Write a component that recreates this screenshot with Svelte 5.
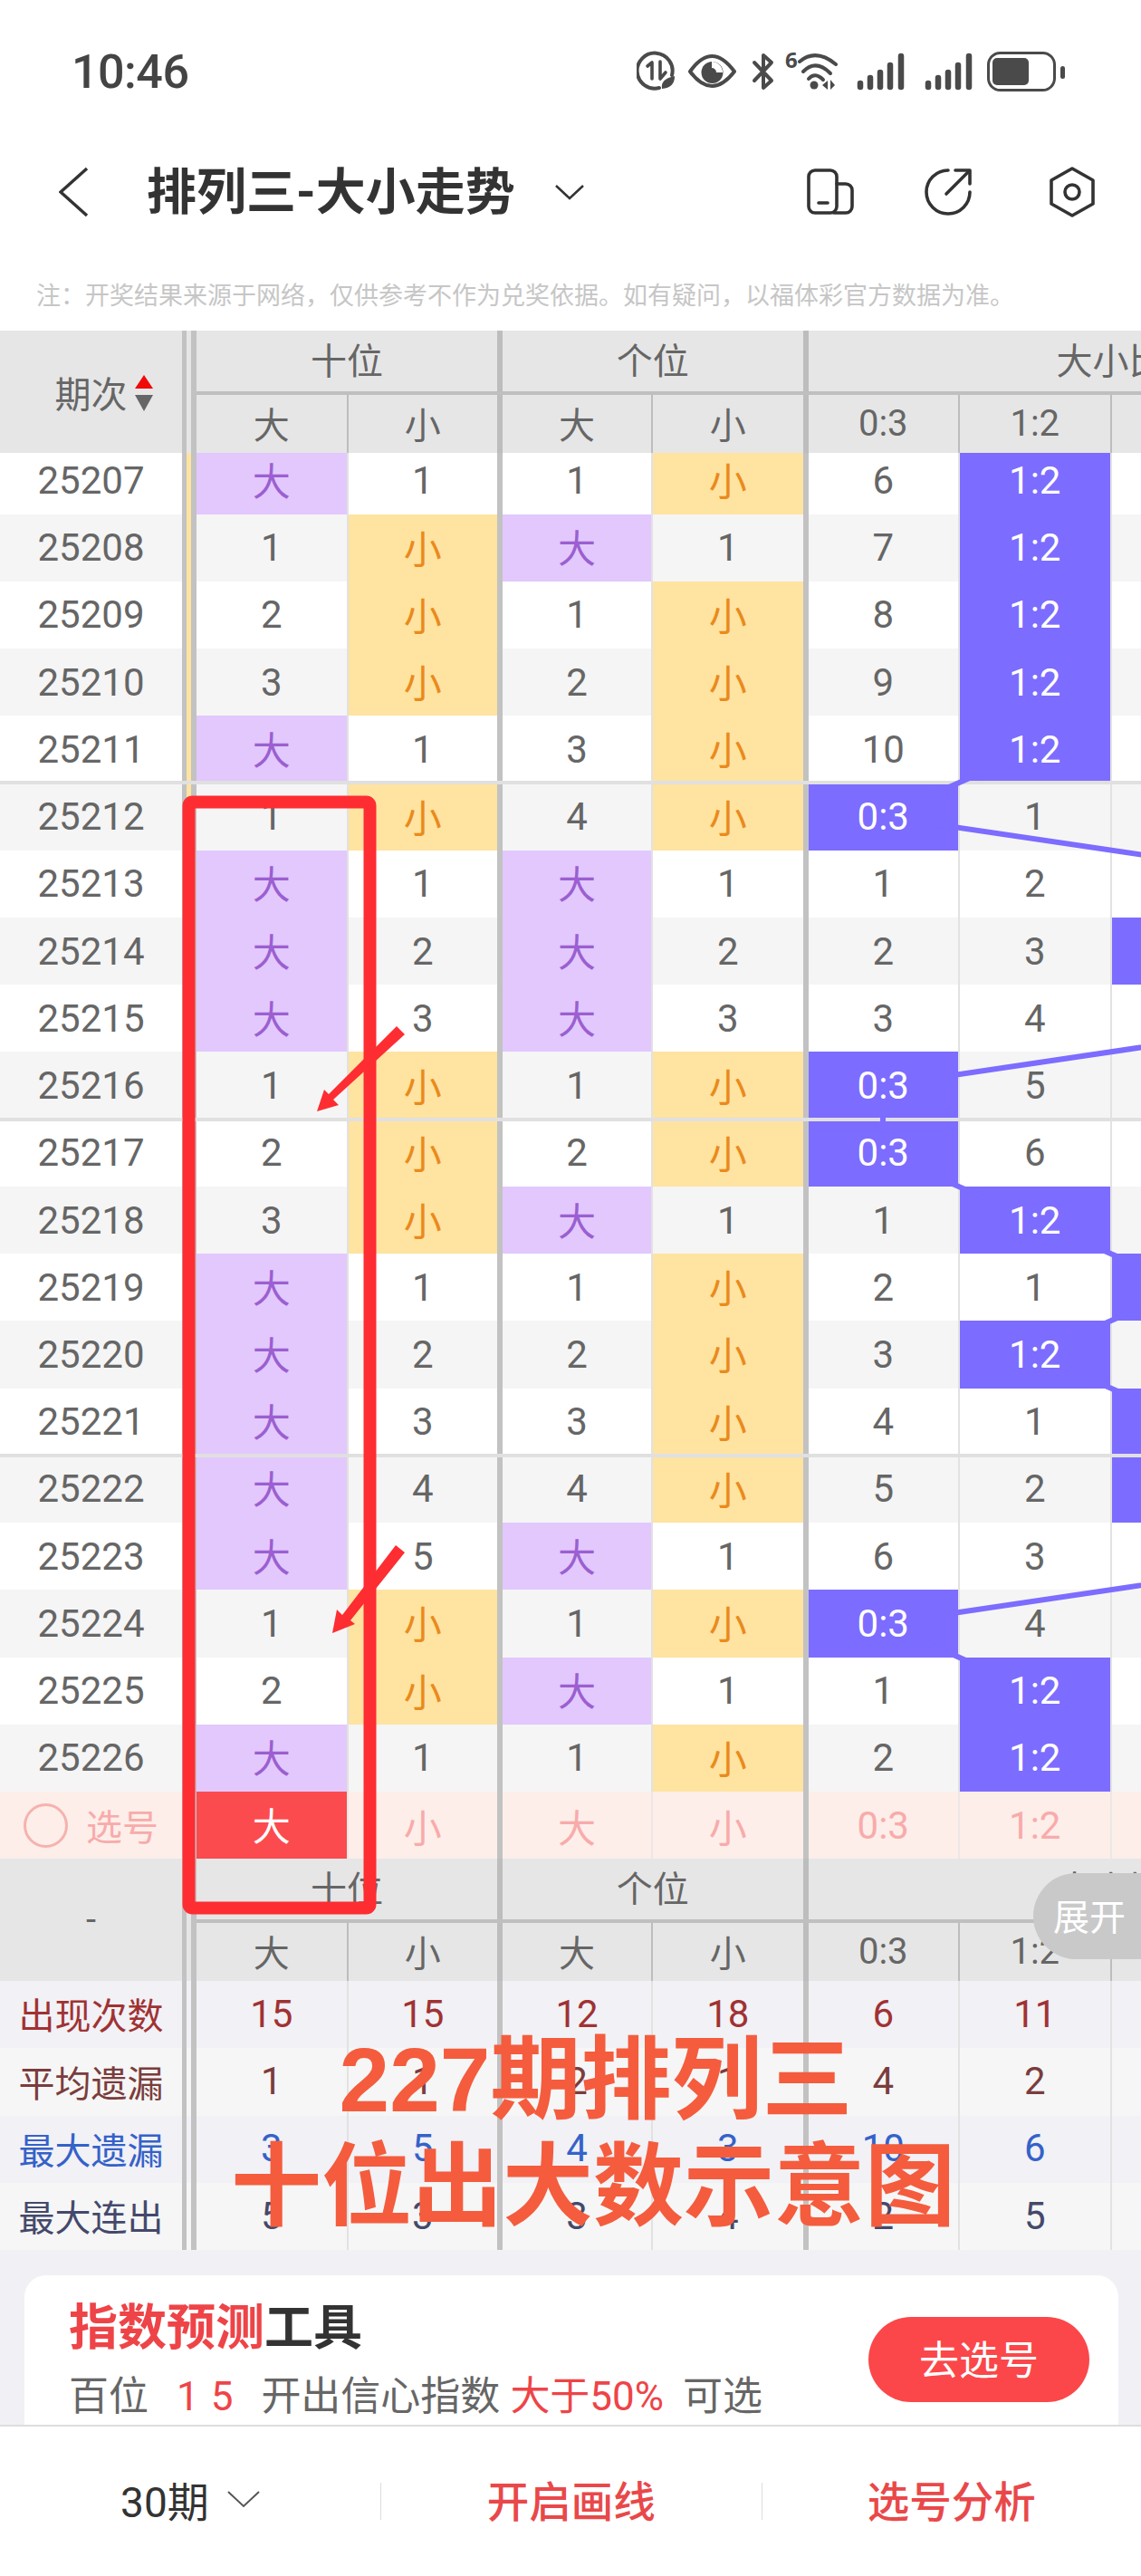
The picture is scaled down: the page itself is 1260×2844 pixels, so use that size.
<script>
  const rows = [
    [25207, ['大','1','1','小','6','1:2'], 0, 1],
    [25208, ['1','小','大','1','7','1:2'], 0, 1],
    [25209, ['2','小','1','小','8','1:2'], 0, 1],
    [25210, ['3','小','2','小','9','1:2'], 0, 1],
    [25211, ['大','1','3','小','10','1:2'], 0, 1],
    [25212, ['1','小','4','小','0:3','1'], 0, 1],
    [25213, ['大','1','大','1','1','2'], 0, 0],
    [25214, ['大','2','大','2','2','3'], 1, 0],
    [25215, ['大','3','大','3','3','4'], 0, 0],
    [25216, ['1','小','1','小','0:3','5'], 0, 0],
    [25217, ['2','小','2','小','0:3','6'], 0, 0],
    [25218, ['3','小','大','1','1','1:2'], 0, 0],
    [25219, ['大','1','1','小','2','1'], 1, 0],
    [25220, ['大','2','2','小','3','1:2'], 0, 0],
    [25221, ['大','3','3','小','4','1'], 1, 0],
    [25222, ['大','4','4','小','5','2'], 1, 0],
    [25223, ['大','5','大','1','6','3'], 0, 0],
    [25224, ['1','小','1','小','0:3','4'], 0, 0],
    [25225, ['2','小','大','1','1','1:2'], 0, 0],
    [25226, ['大','1','1','小','2','1:2'], 0, 0]
  ];
  const colX = [975, 1142, 1311, 1478];
  // blue column per row: 0 = 0:3, 1 = 1:2, 2 = 2:1, 3 = 3:0
  const hits = [1,1,1,1,1,0,3,2,3,0,0,1,2,1,2,2,3,0,1,1];
  const yOf = (i) => 530.3 + 74.24 * i;
  const trend = hits.map((h, i) => `${colX[h]},${yOf(i).toFixed(1)}`).join(' ');
  const sub = ['大','小','大','小','0:3','1:2'];
  const stats = [
    ['出现次数', ['15','15','12','18','6','11'], 's1'],
    ['平均遗漏', ['1','1','2','1','4','2'], 's2'],
    ['最大遗漏', ['3','5','4','3','10','6'], 's3'],
    ['最大连出', ['5','3','3','4','2','5'], 's4']
  ];
  const kind = (v) => (v === '大' ? 'big' : v === '小' ? 'small' : v.includes(':') ? 'hit' : '');
</script>

{#snippet head(period)}
  <div class="head">
    <div class="p phead">{@render period()}</div>
    <div class="rail"></div>
    <div class="head-right">
      <div class="sections">
        <div class="sec a">十位</div>
        <div class="sec b">个位</div>
        <div class="sec c3">大小比</div>
      </div>
      <div class="cells subs">
        {#each sub as s}<div class="c"><span class="t">{s}</span></div>{/each}
        <div class="c"></div>
      </div>
    </div>
  </div>
{/snippet}

{#snippet sortLabel()}
  <span class="sort-label">期次</span>
  <svg class="sort" viewBox="0 0 20 40" width="20" height="40" aria-hidden="true">
    <path d="M10 0 L20 15 H0 Z" fill="#f00a0a"/>
    <path d="M0 22 H20 L10 40 Z" fill="#666"/>
  </svg>
{/snippet}

{#snippet dash()}<span class="dash">-</span>{/snippet}

<div class="page">
  <div class="status">
    <span class="time">10:46</span>
    <svg class="status-icons" viewBox="703 55 475 46" width="475" height="46" aria-hidden="true">
      <g fill="none" stroke="#4a4a4a" stroke-width="4" stroke-linecap="round" stroke-linejoin="round">
        <path d="M728 96 A19.5 19.5 0 1 1 742 82"/>
        <path d="M715 72 L720 68 V86" stroke-width="3.6"/>
        <path d="M729 67 V86 M729 86 L735 79" stroke-width="3.6"/>
        <path d="M762 78 Q786 44 811 78 Q786 110 762 78 Z"/>
        <path d="M833 68 L852 88 L843 96 V60 L852 68 L833 88" stroke-width="4"/>
        <path d="M883 67 Q901 52 923 70"/>
        <path d="M887 78 Q901 64 917 80"/>
        <path d="M893 86 Q900 78 909 87"/>
      </g>
      <path d="M731 97 Q729 86 745 83 Q745 96 731 97 Z" fill="#4a4a4a"/>
      <circle cx="786.5" cy="79" r="12" fill="#4a4a4a"/>
      <path d="M786 67 A12 12 0 0 1 798 79 H791 A5 5 0 0 0 786 74 Z" fill="#fff"/>
      <text x="867" y="74" class="six">6</text>
      <circle cx="899" cy="93" r="4.5" fill="#4a4a4a"/>
      <path d="M908 93 L914 88 V98 Z M917 87 V98 L922 93 Z" fill="#4a4a4a"/>
      <g stroke="#4a4a4a" stroke-width="6.5" stroke-linecap="round">
        <path d="M950 91 V95 M961 85 V95 M972 79 V95 M983 71 V95 M995 61 V95"/>
        <path d="M1025 91 V95 M1036 85 V95 M1047 79 V95 M1058 71 V95 M1070 61 V95"/>
      </g>
      <rect x="1091.5" y="57.5" width="73" height="41" rx="13" fill="none" stroke="#4a4a4a" stroke-width="3"/>
      <rect x="1096" y="63" width="40" height="30" rx="5" fill="#4a4a4a"/>
      <rect x="1171" y="72" width="5" height="14" rx="2.5" fill="#4a4a4a"/>
    </svg>
  </div>

  <div class="nav">
    <svg class="back" viewBox="0 0 34 56" width="34" height="56" aria-hidden="true">
      <path d="M31 2 L2 28 L31 54" fill="none" stroke="#333" stroke-width="3.5"/>
    </svg>
    <span class="title">排列三-大小走势</span>
    <svg class="caret" viewBox="0 0 32 18" width="32" height="18" aria-hidden="true">
      <path d="M1 2 L16 16 L31 2" fill="none" stroke="#333" stroke-width="2.5"/>
    </svg>
    <svg class="n1" viewBox="0 0 54 52" width="54" height="52" aria-hidden="true">
      <g fill="none" stroke="#333" stroke-width="3.6" stroke-linecap="round">
        <rect x="2" y="2" width="31" height="47" rx="7"/>
        <path d="M33 17 H43 A7 7 0 0 1 50 24 V42 A7 7 0 0 1 43 49 H30"/>
        <path d="M13 38 H23"/>
      </g>
    </svg>
    <svg class="n2" viewBox="0 0 54 54" width="54" height="54" aria-hidden="true">
      <g fill="none" stroke="#333" stroke-width="3.6" stroke-linecap="round" stroke-linejoin="round">
        <path d="M27 3 A24 24 0 1 0 51 27"/>
        <path d="M25 29 L50 4"/>
        <path d="M35 3 H51 V18"/>
      </g>
    </svg>
    <svg class="n3" viewBox="0 0 52 56" width="52" height="56" aria-hidden="true">
      <path d="M26 2 L49 15 V41 L26 54 L3 41 V15 Z" fill="none" stroke="#333" stroke-width="3.6" stroke-linejoin="round"/>
      <circle cx="26" cy="28" r="8" fill="none" stroke="#333" stroke-width="3.6"/>
    </svg>
  </div>

  <div class="note">注：开奖结果来源于网络，仅供参考不作为兑奖依据。如有疑问，以福体彩官方数据为准。</div>

  <div class="main">
    {@render head(sortLabel)}

    <div class="body">
      <div class="body-inner">
        {#each rows as r, i}
          <div class="row" class:alt={r[0] % 2 === 0} class:sep={i % 5 === 0 && i > 0}>
            <div class="p"><span class="t">{r[0]}</span></div>
            <div class="rail" class:peek={r[3]}></div>
            <div class="cells">
              {#each r[1] as v}
                <div class="c {kind(v)}"><span class="t">{v}</span></div>
              {/each}
              <div class="c" class:hit={r[2]}></div>
            </div>
          </div>
        {/each}
      </div>
      <svg class="trend" viewBox="0 500 1260 1478" width="1260" height="1478" aria-hidden="true">
        <polyline points={trend} fill="none" stroke="#7c6cff" stroke-width="6"/>
      </svg>
    </div>

    <div class="row pick">
      <div class="p pick-label">
        <span class="ring"></span><span>选号</span>
      </div>
      <div class="rail"></div>
      <div class="cells">
        <div class="c on"><span class="t">大</span></div>
        <div class="c"><span class="t">小</span></div>
        <div class="c"><span class="t">大</span></div>
        <div class="c"><span class="t">小</span></div>
        <div class="c"><span class="t">0:3</span></div>
        <div class="c"><span class="t">1:2</span></div>
        <div class="c"></div>
      </div>
    </div>

    {@render head(dash)}

    {#each stats as s}
      <div class="row stat {s[2]}">
        <div class="p"><span class="t">{s[0]}</span></div>
        <div class="rail"></div>
        <div class="cells">
          {#each s[1] as v}<div class="c"><span class="t">{v}</span></div>{/each}
          <div class="c"></div>
        </div>
      </div>
    {/each}

    <div class="card">
      <div class="card-text">
        <div class="card-title"><em>指数预测</em>工具</div>
        <div class="card-sub">
          <span class="w1">百位</span><em class="w2">1 5</em><span class="w3">开出信心指数</span><em class="w4">大于50%</em><span class="w5">可选</span>
        </div>
      </div>
      <div class="go">去选号</div>
    </div>
  </div>

  <div class="bar">
    <div class="bar-item first">
      <span>30期</span>
      <svg viewBox="0 0 36 20" width="36" height="20" aria-hidden="true">
        <path d="M1 2 L18 18 L35 2" fill="none" stroke="#555" stroke-width="2"/>
      </svg>
    </div>
    <div class="bar-item red">开启画线</div>
    <div class="bar-item red">选号分析</div>
  </div>

  <div class="expand">展开</div>

  <svg class="marks" viewBox="0 0 1260 2844" width="1260" height="2844" aria-hidden="true">
    <rect x="208.5" y="885.5" width="200" height="1221" rx="4" fill="none" stroke="#fd2d32" stroke-width="14" stroke-linejoin="round"/>
    <polygon points="438,1133 447,1142 368,1214 374,1220 350,1227 358,1203 363,1208" fill="#fd2d32"/>
    <polygon points="437,1706 447,1714 387,1789 392,1793 367,1803 372,1777 378,1783" fill="#fd2d32"/>
  </svg>

  <div class="poster">
    <div class="poster1">227期排列三</div>
    <div class="poster2">十位出大数示意图</div>
  </div>
</div>

<style>
  :global(body) { margin: 0; }
  .page {
    position: relative;
    width: 1260px;
    height: 2844px;
    overflow: hidden;
    background: #fff;
    display: flex;
    flex-direction: column;
    font-family: Roboto, "Noto Sans CJK SC", sans-serif;
    color: #666;
    font-size: 42px;
  }
  .status {
    height: 160px;
    flex: none;
    display: flex;
    align-items: center;
    padding-left: 79px;
    position: relative;
  }
  .time { font-size: 52px; font-weight: 500; color: #444; letter-spacing: -0.5px; line-height: 1; }
  .status-icons { margin-left: auto; margin-right: 82px; margin-top: -2px; }
  .six { font: 700 24px "Open Sans", sans-serif; fill: #4a4a4a; }
  .nav {
    height: 104px;
    flex: none;
    display: flex;
    align-items: center;
    padding-left: 65px;
  }
  .back { flex: none; }
  .title {
    margin-left: 63px;
    width: 403px;
    font-size: 55px;
    font-weight: 700;
    color: #333;
    white-space: nowrap;
    line-height: 1;
  }
  .caret { margin-left: 48px; flex: none; }
  .n1 { margin-left: 246px; flex: none; }
  .n2 { margin-left: 75px; flex: none; }
  .n3 { margin-left: 84px; flex: none; }
  .note {
    height: 101px;
    flex: none;
    box-sizing: border-box;
    padding: 47px 0 0 40px;
    font-size: 27px;
    line-height: 32px;
    color: #c6c6c6;
    white-space: nowrap;
  }
  .main {
    flex: 1;
    min-height: 0;
    overflow: hidden;
    background: #f1f1f5;
    position: relative;
  }
  .head {
    display: flex;
    height: 135px;
    background: #e6e6e6;
    position: relative;
  }
  .p {
    flex: none;
    width: 201px;
    display: flex;
    align-items: center;
    justify-content: center;
  }
  .phead { font-size: 40px; box-sizing: border-box; }
  .head:first-child .phead { padding-left: 28px; }
  .sort-label { margin-right: 8px; }
  .sort { flex: none; margin-top: 2px; }
  .dash { font-size: 40px; color: #666; }
  .rail {
    flex: none;
    width: 16px;
    box-sizing: border-box;
    border-left: 5px solid #c2c2c2;
    border-right: 6px solid #c2c2c2;
    position: relative;
  }
  .rail.peek { background: #fee3a1; }
  .head-right { flex: 1; min-width: 0; display: flex; flex-direction: column; overflow: hidden; }
  .sections {
    display: flex;
    height: 67px;
    box-sizing: content-box;
    border-bottom: 4px solid #bfbfbf;
    flex: none;
  }
  .sec {
    flex: none;
    box-sizing: border-box;
    border-right: 6px solid #bdbdbd;
    display: flex;
    align-items: center;
    justify-content: center;
    font-size: 40px;
    padding-bottom: 6px;
  }
  .sec.a { width: 338px; }
  .sec.b { width: 337.5px; }
  .sec.c3 { width: 668px; border-right: 0; }
  .cells { display: flex; flex: 1; min-width: 0; overflow: hidden; }
  .subs { height: 64px; flex: none; }
  .c {
    flex: none;
    box-sizing: border-box;
    width: 167.5px;
    height: 100%;
    border-right: 2.5px solid #e2e2e2;
    display: flex;
    align-items: center;
    justify-content: center;
  }
  .c:nth-child(2) { width: 170.5px; border-right: 6px solid #c2c2c2; }
  .c:nth-child(3) { width: 166px; }
  .c:nth-child(4) { width: 171.5px; border-right: 6px solid #c2c2c2; }
  .subs .c { border-right-color: #bdbdbd; font-size: 40px; padding-bottom: 2px; }
  .t { position: relative; z-index: 3; }
  .body { position: relative; height: 1478px; overflow: hidden; }
  .body-inner { margin-top: -6.7px; }
  .row {
    display: flex;
    height: 74.24px;
    background: #fff;
    position: relative;
  }
  .row.alt { background: #f5f5f5; }
  .row.sep::before {
    content: "";
    position: absolute;
    left: 0;
    right: 0;
    top: -2px;
    height: 4px;
    background: #e0e0e0;
    z-index: 1;
  }
  .big { background: #e2c8fd; color: #9b5fd0; padding-bottom: 4px; }
  .small { background: #fee3a1; color: #ea8a1c; padding-bottom: 3px; }
  .hit { background: #7c6cff; color: #fff; }
  .pick { background: #fdeee9; color: #f8abab; }
  .pick .c { border-right-color: #ece8e4; }
  .pick .c:nth-child(2), .pick .c:nth-child(4) { border-right-color: #c2c2c2; }
  .pick .on { background: #fb4b4f; color: #fff; border-right-color: #ece8e4; padding-bottom: 3px; }
  .pick-label { justify-content: flex-start; padding-left: 26px; box-sizing: border-box; font-size: 40px; }
  .ring {
    width: 49px;
    height: 49px;
    box-sizing: border-box;
    border: 3px solid #f6b2ae;
    border-radius: 50%;
    margin-right: 20px;
    flex: none;
  }
  .stat { height: 74.25px; }
  .stat .p { font-size: 40px; padding-bottom: 2px; box-sizing: border-box; }
  .stat .c { padding-bottom: 2px; }
  .s1 { background: #f1f1f6; color: #a03233; }
  .s2 { background: #f6f6f6; color: #7a3d3d; }
  .s3 { background: #f1f1f6; color: #3562c8; }
  .s4 { background: #f6f6f6; color: #44496b; }
  .card {
    position: relative;
    margin: 28px 25px 0 27px;
    height: 260px;
    background: #fff;
    border-radius: 24px;
    box-sizing: border-box;
    padding: 32px 32px 0 49px;
    display: flex;
    justify-content: space-between;
  }
  .card em { font-style: normal; color: #ee4448; }
  .card-title { font-size: 54px; font-weight: 700; color: #333; line-height: 54px; }
  .card-sub { display: flex; margin-top: 21px; font-size: 44px; line-height: 54px; white-space: nowrap; }
  .w2 { margin-left: 31px; letter-spacing: 1px; }
  .w3 { margin-left: 30px; }
  .w4 { margin-left: 11px; }
  .w5 { margin-left: 21px; }
  .go {
    width: 244px;
    height: 94px;
    margin-top: 14px;
    border-radius: 47px;
    background: #fb474a;
    color: #fff;
    font-size: 44px;
    padding-bottom: 4px;
    box-sizing: border-box;
    display: flex;
    align-items: center;
    justify-content: center;
    flex: none;
  }
  .bar {
    flex: none;
    height: 167px;
    box-sizing: border-box;
    border-top: 2px solid #ddd;
    background: #fff;
    display: flex;
    align-items: center;
    position: relative;
  }
  .bar-item {
    width: 33.4%;
    height: 41px;
    box-sizing: border-box;
    display: flex;
    align-items: center;
    justify-content: center;
    font-size: 46px;
    color: #333;
    border-right: 1px solid #ddd;
    padding-bottom: 6px;
  }
  .bar-item:last-child { border-right: 0; width: 33.2%; }
  .bar-item.red { color: #e9484a; font-weight: 500; font-size: 46.5px; }
  .first svg { margin-left: 20px; }
  .expand {
    position: absolute;
    left: 1141px;
    top: 2068px;
    width: 119px;
    height: 95px;
    border-radius: 48px 0 0 48px;
    background: #c9c9c9;
    color: #fff;
    font-size: 40px;
    display: flex;
    align-items: center;
    padding-left: 22px;
    padding-bottom: 3px;
    box-sizing: border-box;
    z-index: 5;
  }
  .marks { position: absolute; left: 0; top: 0; z-index: 6; pointer-events: none; }
  .trend { position: absolute; left: 0; top: 0; z-index: 2; pointer-events: none; }
  .poster {
    position: absolute;
    left: 0;
    top: 2237px;
    width: 1260px;
    z-index: 7;
    text-align: center;
    font-family: "Liberation Sans", "Noto Sans CJK SC", sans-serif;
    font-weight: 700;
    font-size: 100px;
    line-height: 118px;
    color: #f45c3d;
  }
  .poster1 { padding-left: 56px; }
  .poster2 { padding-left: 50px; }
</style>
